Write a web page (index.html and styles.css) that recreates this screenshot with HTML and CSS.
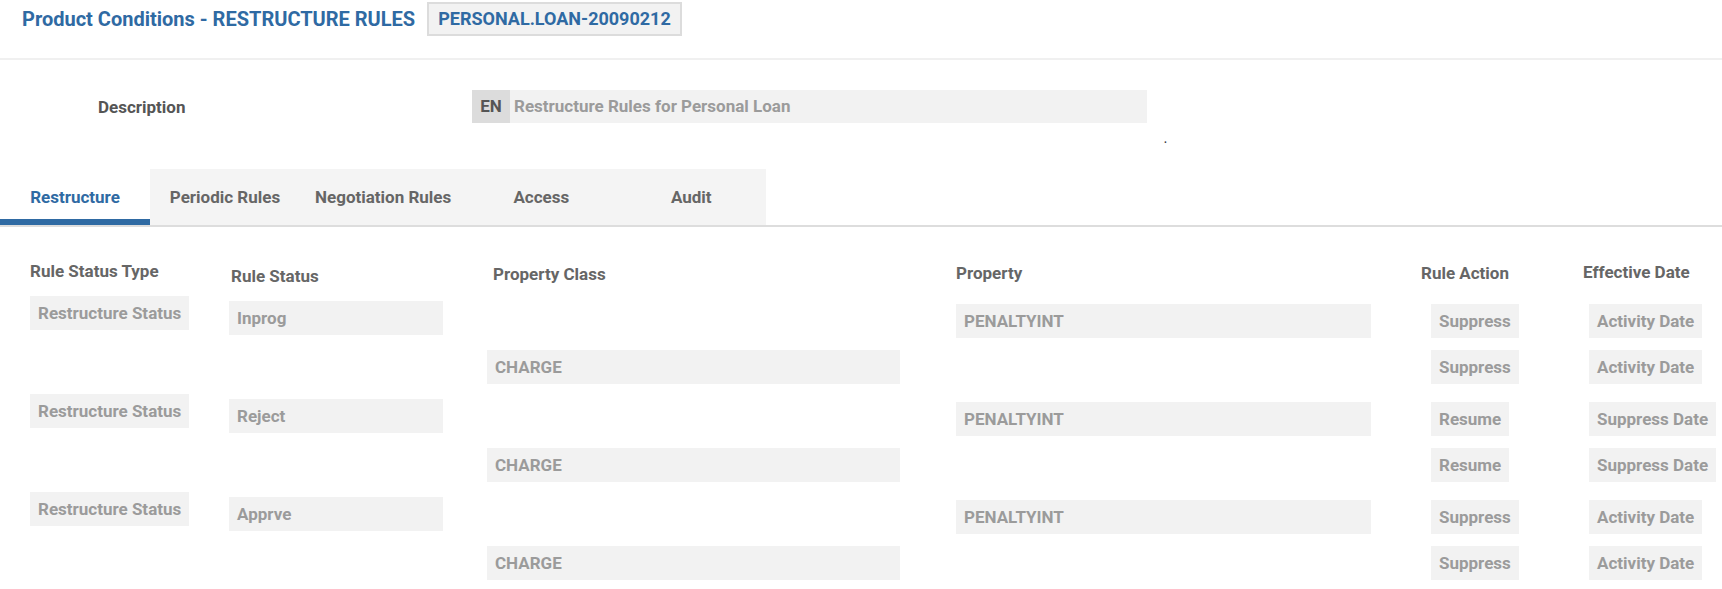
FILE: index.html
```html
<!DOCTYPE html>
<html>
<head>
<meta charset="utf-8">
<link rel="stylesheet" href="styles.css">
</head>
<body>
<header class="topbar">
  <h1 class="title">Product Conditions - RESTRUCTURE RULES</h1>
  <span class="badge">PERSONAL.LOAN-20090212</span>
</header>

<section class="desc-row">
  <div class="desc-label">Description</div>
  <div class="lang-input">
    <span class="lang">EN</span>
    <span class="lang-value">Restructure Rules for Personal Loan</span>
  </div>
</section>
<div class="dot-row">.</div>

<nav class="tabs">
  <div class="tab active">Restructure</div>
  <div class="tab">Periodic Rules</div>
  <div class="tab">Negotiation Rules</div>
  <div class="tab">Access</div>
  <div class="tab">Audit</div>
</nav>

<section class="rules">
  <div class="hd hd-1">Rule Status Type</div>
  <div class="hd hd-2">Rule Status</div>
  <div class="hd hd-3">Property Class</div>
  <div class="hd hd-4">Property</div>
  <div class="hd hd-5">Rule Action</div>
  <div class="hd hd-6">Effective Date</div>

  <div class="cell"><span class="box up">Restructure Status</span></div>
  <div class="cell"><span class="box w-status">Inprog</span></div>
  <div class="cell"></div>
  <div class="cell"><span class="box w-prop dn">PENALTYINT</span></div>
  <div class="cell c5"><span class="box dn">Suppress</span></div>
  <div class="cell c6"><span class="box dn">Activity Date</span></div>

  <div class="cell"></div>
  <div class="cell"></div>
  <div class="cell"><span class="box w-class">CHARGE</span></div>
  <div class="cell"></div>
  <div class="cell c5"><span class="box">Suppress</span></div>
  <div class="cell c6"><span class="box">Activity Date</span></div>

  <div class="cell"><span class="box up">Restructure Status</span></div>
  <div class="cell"><span class="box w-status">Reject</span></div>
  <div class="cell"></div>
  <div class="cell"><span class="box w-prop dn">PENALTYINT</span></div>
  <div class="cell c5"><span class="box dn">Resume</span></div>
  <div class="cell c6"><span class="box dn">Suppress Date</span></div>

  <div class="cell"></div>
  <div class="cell"></div>
  <div class="cell"><span class="box w-class">CHARGE</span></div>
  <div class="cell"></div>
  <div class="cell c5"><span class="box">Resume</span></div>
  <div class="cell c6"><span class="box">Suppress Date</span></div>

  <div class="cell"><span class="box up">Restructure Status</span></div>
  <div class="cell"><span class="box w-status">Apprve</span></div>
  <div class="cell"></div>
  <div class="cell"><span class="box w-prop dn">PENALTYINT</span></div>
  <div class="cell c5"><span class="box dn">Suppress</span></div>
  <div class="cell c6"><span class="box dn">Activity Date</span></div>

  <div class="cell"></div>
  <div class="cell"></div>
  <div class="cell"><span class="box w-class">CHARGE</span></div>
  <div class="cell"></div>
  <div class="cell c5"><span class="box">Suppress</span></div>
  <div class="cell c6"><span class="box">Activity Date</span></div>
</section>
</body>
</html>
```

FILE: styles.css
```css
* { box-sizing: border-box; }

body {
  margin: 0;
  font-family: Roboto, "Liberation Sans", sans-serif;
  font-weight: 700;
  background: #ffffff;
}

.topbar {
  display: flex;
  align-items: flex-start;
  gap: 12px;
  height: 60px;
  padding: 2px 0 0 22px;
  border-bottom: 2px solid #f0f0f0;
}

.title {
  margin: 0;
  font-size: 20px;
  line-height: 34px;
  font-weight: 700;
  color: #2f6aa3;
}

.badge {
  height: 34px;
  line-height: 30px;
  padding: 0 9px;
  border: 2px solid #dcdcdc;
  background: #f2f2f2;
  color: #2f6aa3;
  font-size: 18px;
}

.desc-row {
  display: flex;
  align-items: center;
  margin-top: 30px;
  padding-left: 98px;
}

.desc-label {
  width: 374px;
  font-size: 17px;
  color: #555555;
}

.lang-input {
  display: flex;
  width: 675px;
  height: 33px;
  background: #f2f2f2;
  line-height: 33px;
  font-size: 17px;
}

.lang {
  width: 38px;
  background: #dcdcdc;
  color: #555555;
  text-align: center;
}

.lang-value {
  padding-left: 4px;
  color: #9b9b9b;
}

.dot-row {
  height: 10px;
  margin-top: 12px;
  padding-left: 1164px;
  font-size: 10px;
  line-height: 10px;
  color: #333;
}

.tabs {
  display: flex;
  margin-top: 24px;
  border-bottom: 2px solid #dddddd;
}

.tab {
  min-width: 150px;
  height: 56px;
  padding: 0 15px;
  line-height: 56px;
  text-align: center;
  font-size: 17px;
  color: #666666;
  background: #f4f4f4;
}

.tab.active {
  background: #ffffff;
  color: #2f6aa3;
  box-shadow: inset 0 -6px 0 #2f6aa3;
}

.rules {
  display: grid;
  grid-template-columns: 199px 258px 469px 465px 162px 139px;
  grid-template-rows: 38px repeat(6, 49px);
  padding: 36px 0 0 30px;
  align-items: start;
}

.hd {
  height: 20px;
  font-size: 17px;
  line-height: 20px;
  color: #666666;
}

.hd-1 { margin-top: -2px; }
.hd-2 { margin-top: 3px; padding-left: 2px; }
.hd-3 { padding-left: 6px; margin-top: 1px; }
.hd-6 { margin-top: -1px; }

.cell { height: 49px; }

.c5 { padding-left: 10px; }
.c6 { padding-left: 6px; }

.box {
  display: inline-block;
  height: 34px;
  line-height: 34px;
  padding: 0 8px;
  background: #f2f2f2;
  color: #9b9b9b;
  font-size: 17px;
  white-space: nowrap;
}

.w-status { width: 214px; }
.w-class { width: 413px; }
.w-prop { width: 415px; }

.up { margin-top: -5px; }
.dn { margin-top: 3px; }
```
